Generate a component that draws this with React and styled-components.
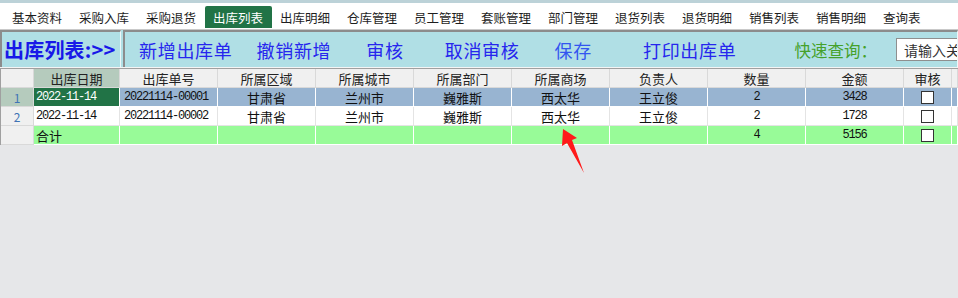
import styled, { createGlobalStyle } from 'styled-components';

const GlobalStyle = createGlobalStyle`
  html, body {
    margin: 0;
    padding: 0;
    overflow: hidden;
    background: #e6e7e9;
  }
  * {
    box-sizing: border-box;
  }
`;

const Page = styled.div`
  position: relative;
  width: 958px;
  height: 298px;
  display: flex;
  flex-direction: column;
  overflow: hidden;
  font-family: 'Noto Sans CJK SC', 'Noto Sans', sans-serif;
  background: #e6e7e9;
`;

const MenuBar = styled.nav`
  height: 30px;
  display: flex;
  align-items: flex-end;
  padding: 0 0 1px 2px;
  background: #fff;
  border-top: 3px solid #bcd2d8;
  border-bottom: 1px solid #c9c9c9;
`;

// each tab is a fixed 67px slot, text starts 10px in
const MenuItem = styled.div`
  width: 67px;
  height: 22px;
  flex: none;
  display: flex;
  align-items: center;
  padding-left: ${(p) => (p.$active ? '8px' : '10px')};
  font-size: 12.5px;
  color: ${(p) => (p.$active ? '#fff' : '#1e1e1e')};
  background: ${(p) => (p.$active ? '#217346' : 'transparent')};
  border-radius: ${(p) => (p.$active ? '2px 2px 0 0' : '0')};
  margin-left: ${(p) => (p.$active ? '2px' : '0')};
  margin-right: ${(p) => (p.$active ? '-2px' : '0')};
`;

const Toolbar = styled.div`
  height: 38px;
  display: flex;
  gap: 2px;
  background: #b0dfe5;
  border-bottom: 1px solid #f4f4f4;
`;

const Panel = styled.div`
  display: flex;
  align-items: center;
  flex: ${(p) => (p.$grow ? 1 : 'none')};
  width: ${(p) => (p.$width ? `${p.$width}px` : 'auto')};
  border-top: 2px solid #8c8c8c;
  border-left: 2px solid #8c8c8c;
  border-right: 1px solid #eef7f8;
  overflow: hidden;
  white-space: nowrap;
`;

const Title = styled.div`
  padding-left: 2px;
  font-size: 20px;
  font-weight: 700;
  color: #1818e8;
  letter-spacing: 0.2px;
`;

const ToolButton = styled.div`
  margin-left: ${(p) => p.$ml}px;
  font-size: 18px;
  letter-spacing: 0.7px;
  color: ${(p) => p.$color || '#2626ee'};
  cursor: pointer;
`;

const QuickLabel = styled.div`
  margin-left: ${(p) => p.$ml}px;
  font-size: 16.5px;
  color: #45a12a;
`;

const SearchInput = styled.input`
  margin-left: 19px;
  width: 170px;
  height: 23px;
  flex: none;
  border: 1px solid #8f8f8f;
  padding: 0 7px;
  font-family: 'Noto Sans CJK SC', sans-serif;
  font-size: 14px;
  color: #333;
  &::placeholder {
    color: #333;
  }
`;

const Grid = styled.div`
  display: grid;
  grid-template-columns: 33px 86px repeat(8, 98px) 48px 1fr;
  grid-auto-rows: 19px;
  border-top: 1px solid #a0a0a0;
  border-left: 1px solid #a0a0a0;
`;

const rowBg = {
  head: '#f0f0f0',
  selected: '#98b4d1',
  normal: '#ffffff',
  total: '#98fb98',
};

const lineColor = (row) => (row === 'head' ? '#d9d9d9' : row === 'normal' ? '#e4e4e4' : '#ffffff');

const Cell = styled.div`
  display: flex;
  align-items: center;
  justify-content: ${(p) => (p.$left ? 'flex-start' : 'center')};
  padding-left: ${(p) => (p.$left ? '2px' : '0')};
  background: ${(p) => p.$bg || rowBg[p.$row]};
  color: ${(p) => p.$fg || '#111'};
  border-right: 1px solid ${(p) => lineColor(p.$row)};
  border-bottom: 1px solid ${(p) => lineColor(p.$row)};
  font-size: 13px;
  white-space: nowrap;
  overflow: hidden;
`;

const HeadCell = styled(Cell)`
  color: #222;
`;

const RowNum = styled(Cell)`
  color: #3f73b5;
  font-size: 12px;
  border-color: #d9d9d9;
`;

const Mono = styled.span`
  font-family: 'Liberation Mono', 'DejaVu Sans Mono', monospace;
  font-size: 12px;
  letter-spacing: -1.2px;
  padding-left: ${(p) => (p.$pad ? '2px' : '0')};
`;

const Check = styled.span`
  width: 13px;
  height: 13px;
  border: 1px solid #333;
  background: #fff;
`;

const Arrow = styled.svg`
  position: absolute;
  left: 555px;
  top: 125px;
`;

const menus = [
  '基本资料', '采购入库', '采购退货', '出库列表', '出库明细', '仓库管理', '员工管理',
  '套账管理', '部门管理', '退货列表', '退货明细', '销售列表', '销售明细', '查询表',
];

const columns = ['出库日期', '出库单号', '所属区域', '所属城市', '所属部门', '所属商场', '负责人', '数量', '金额', '审核'];

const rows = [
  { no: 1, date: '2022-11-14', code: '20221114-00001', area: '甘肃省', city: '兰州市', dept: '巍雅斯', mall: '西太华', person: '王立俊', qty: 2, amount: 3428, selected: true },
  { no: 2, date: '2022-11-14', code: '20221114-00002', area: '甘肃省', city: '兰州市', dept: '巍雅斯', mall: '西太华', person: '王立俊', qty: 2, amount: 1728 },
];

export default function App() {
  return (
    <Page>
      <GlobalStyle />
      <MenuBar>
        {menus.map((m) => (
          <MenuItem key={m} $active={m === '出库列表'}>{m}</MenuItem>
        ))}
      </MenuBar>

      <Toolbar>
        <Panel $width={121}>
          <Title>出库列表:&gt;&gt;</Title>
        </Panel>
        <Panel $grow>
          <ToolButton $ml={14}>新增出库单</ToolButton>
          <ToolButton $ml={24}>撤销新增</ToolButton>
          <ToolButton $ml={35}>审核</ToolButton>
          <ToolButton $ml={41}>取消审核</ToolButton>
          <ToolButton $ml={35} $color="#3355f0">保存</ToolButton>
          <ToolButton $ml={51}>打印出库单</ToolButton>
          <QuickLabel $ml={58}>快速查询：</QuickLabel>
          <SearchInput placeholder="请输入关键字" />
        </Panel>
      </Toolbar>

      <Grid>
        <HeadCell $row="head" />
        {columns.map((c, i) => (
          <HeadCell key={c} $row="head" $bg={i === 0 ? '#b5cbbd' : undefined}>{c}</HeadCell>
        ))}
        <HeadCell $row="head" />

        {rows.map((r) => {
          const row = r.selected ? 'selected' : 'normal';
          return [
            <RowNum key={`n${r.no}`} $row="head" $bg={r.selected ? '#b5cbbd' : undefined}>{r.no}</RowNum>,
            <Cell key={`d${r.no}`} $row={row} $left $bg={r.selected ? '#217346' : undefined} $fg={r.selected ? '#fff' : undefined}>
              <Mono>{r.date}</Mono>
            </Cell>,
            <Cell key={`c${r.no}`} $row={row} $left><Mono $pad>{r.code}</Mono></Cell>,
            <Cell key={`a${r.no}`} $row={row}>{r.area}</Cell>,
            <Cell key={`ci${r.no}`} $row={row}>{r.city}</Cell>,
            <Cell key={`de${r.no}`} $row={row}>{r.dept}</Cell>,
            <Cell key={`m${r.no}`} $row={row}>{r.mall}</Cell>,
            <Cell key={`p${r.no}`} $row={row}>{r.person}</Cell>,
            <Cell key={`q${r.no}`} $row={row}><Mono>{r.qty}</Mono></Cell>,
            <Cell key={`am${r.no}`} $row={row}><Mono>{r.amount}</Mono></Cell>,
            <Cell key={`ck${r.no}`} $row={row}><Check /></Cell>,
            <Cell key={`x${r.no}`} $row={row} />,
          ];
        })}

        <RowNum $row="head" />
        <Cell $row="total" $left>合计</Cell>
        <Cell $row="total" />
        <Cell $row="total" />
        <Cell $row="total" />
        <Cell $row="total" />
        <Cell $row="total" />
        <Cell $row="total" />
        <Cell $row="total"><Mono>4</Mono></Cell>
        <Cell $row="total"><Mono>5156</Mono></Cell>
        <Cell $row="total"><Check /></Cell>
        <Cell $row="total" />
      </Grid>

      <Arrow width="40" height="56" viewBox="555 125 40 56">
        <polygon points="563,129 577,138 572,140 584,173 567,143 562,146" fill="#ff1a1a" />
      </Arrow>
    </Page>
  );
}
